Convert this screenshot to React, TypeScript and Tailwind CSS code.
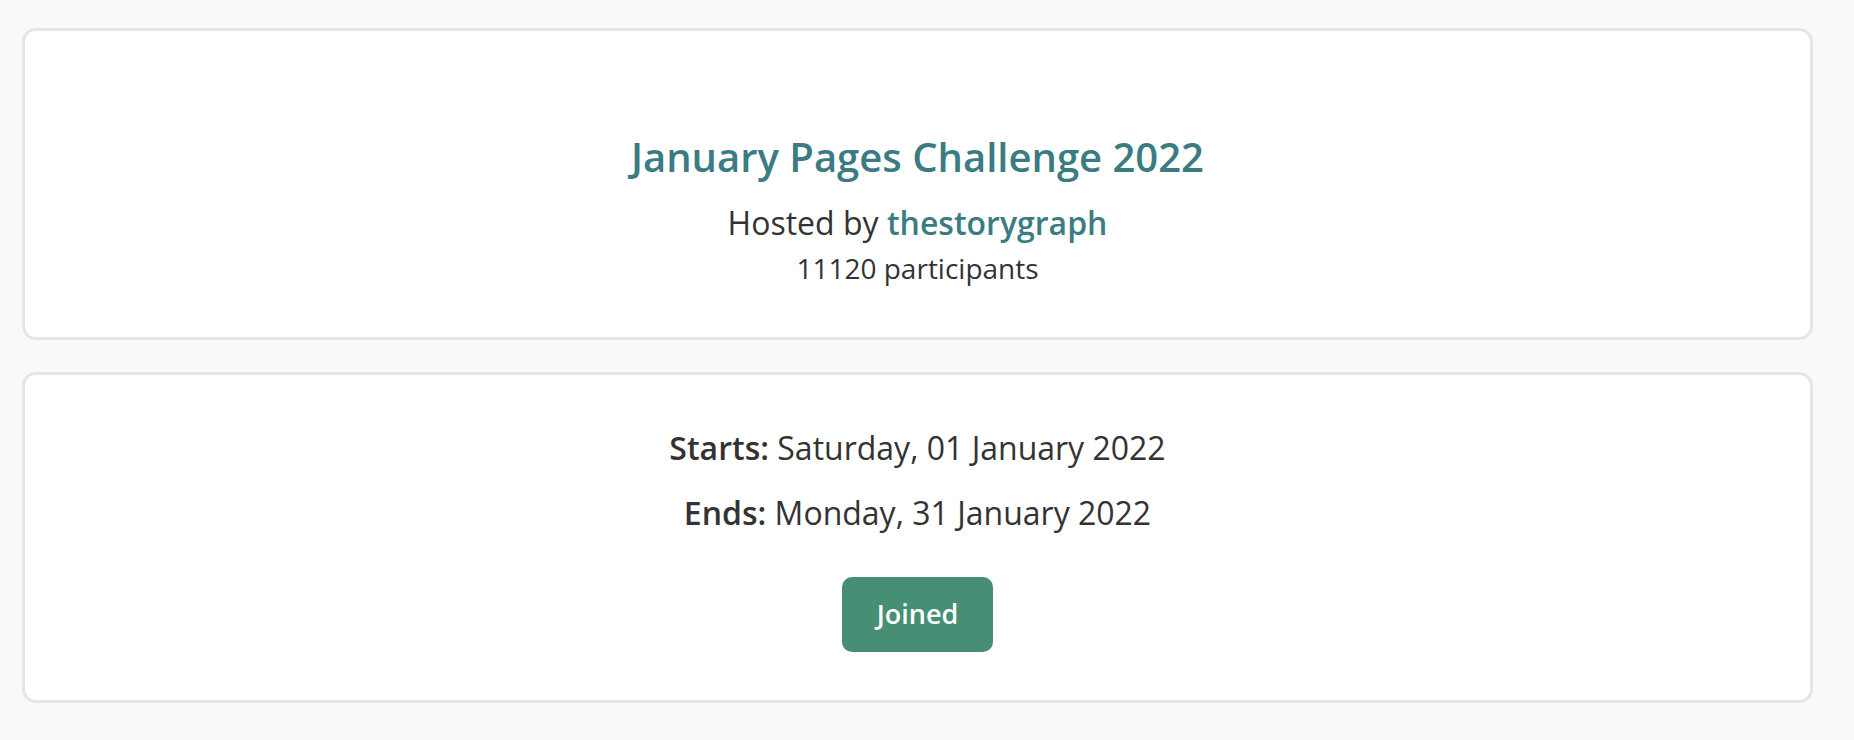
const challenge = {
  title: "January Pages Challenge 2022",
  host: "thestorygraph",
  participants: 11120,
  starts: "Saturday, 01 January 2022",
  ends: "Monday, 31 January 2022",
};

export default function App() {
  return (
    <div
      className="min-h-screen bg-[#f9f9f9] pt-[28px] pb-[37px] text-[#333333]"
      style={{ fontFamily: '"Open Sans", "Liberation Sans", sans-serif' }}
    >
      <div className="ml-[22px] mr-[41px] flex flex-col gap-[32px]">
        <div className="rounded-[14px] border-[3px] border-[#e5e5e5] bg-white pt-[99px] pb-[51px] text-center">
          <h1 className="text-[40px] leading-[54px] font-semibold text-[#3a7c82]">
            {challenge.title}
          </h1>
          <p className="mt-[18px] text-[32px] leading-[42px]">
            Hosted by{" "}
            <a href="#" className="font-semibold text-[#3a7c82]">
              {challenge.host}
            </a>
          </p>
          <p className="mt-[6px] text-[28px] leading-[36px]">
            {challenge.participants} participants
          </p>
        </div>

        <div className="flex flex-col items-center rounded-[14px] border-[3px] border-[#e5e5e5] bg-white pt-[52px] pb-[48px] text-center">
          <p className="text-[32px] leading-[42px]">
            <span className="font-semibold">Starts:</span> {challenge.starts}
          </p>
          <p className="mt-[23px] text-[32px] leading-[42px]">
            <span className="font-semibold">Ends:</span> {challenge.ends}
          </p>
          <button className="mt-[43px] flex h-[75px] w-[151px] items-center justify-center rounded-[10px] bg-[#468f74] text-[27px] font-semibold text-white">
            Joined
          </button>
        </div>
      </div>
    </div>
  );
}
